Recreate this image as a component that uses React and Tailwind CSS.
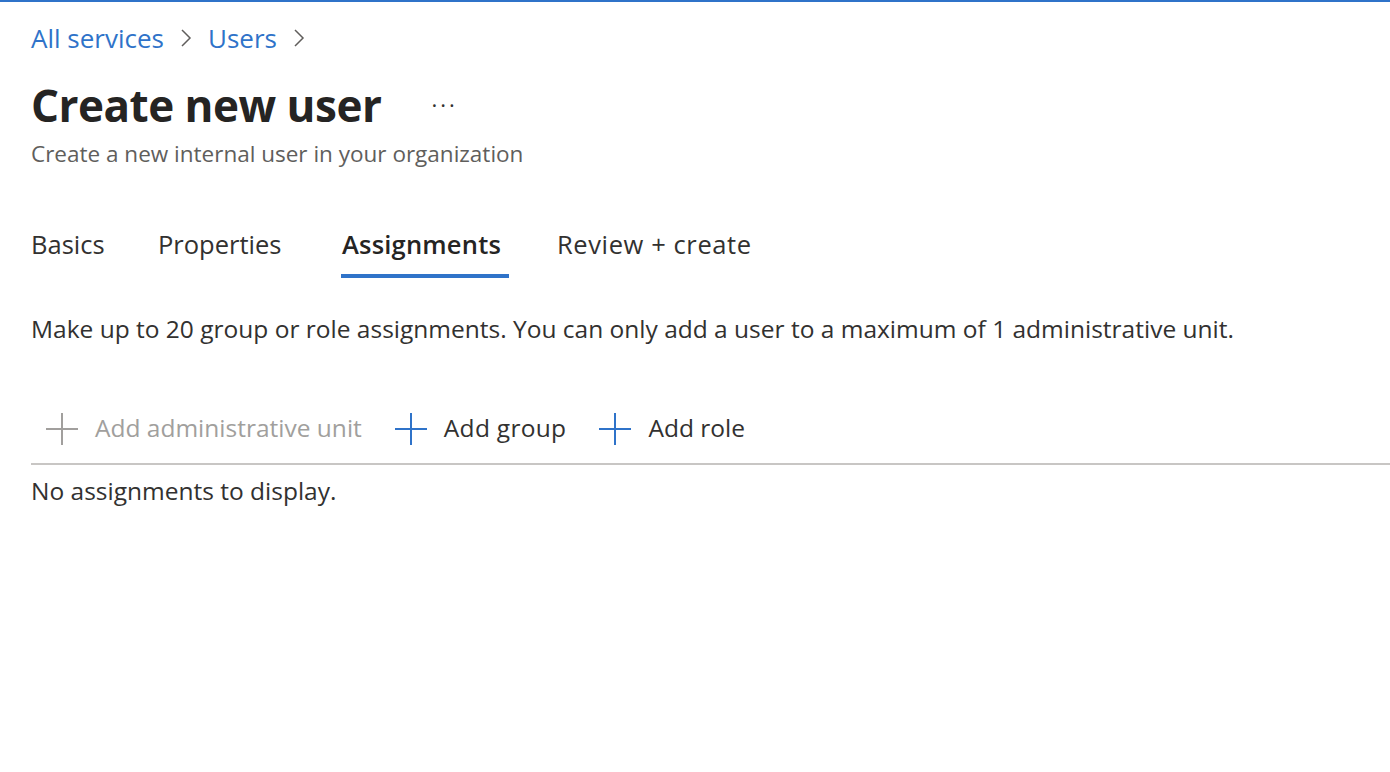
import React from "react";

function Plus({ color }) {
  return (
    <svg width="34" height="34" viewBox="0 0 34 34" className="shrink-0">
      <path d="M17 1V33M1 17H33" stroke={color} strokeWidth="2" fill="none" />
    </svg>
  );
}

function Chevron() {
  return (
    <svg width="14" height="22" viewBox="0 0 14 22" className="shrink-0">
      <path d="M3 3L11 11L3 19" stroke="#605e5c" strokeWidth="1.5" fill="none" />
    </svg>
  );
}

export default function App() {
  return (
    <div
      className="w-[1390px] h-[772px] bg-white border-t-2 border-[#2f73c9] text-[#323130] overflow-hidden"
      style={{ fontFamily: '"Open Sans", "Noto Sans", sans-serif' }}
    >
      <div className="pl-[31px]">
        <div className="flex items-center gap-[15px] mt-[18px] h-[36px] text-[26px] text-[#2f73c9]">
          <span>All services</span>
          <Chevron />
          <span>Users</span>
          <Chevron />
        </div>
        <div className="flex items-center mt-[21px] h-[56px]">
          <h1 className="text-[44px] font-bold text-[#252423] tracking-[-0.5px]">Create new user</h1>
          <span className="ml-[50px] text-[22px] text-[#323130] tracking-[3px] -mt-[2px]">···</span>
        </div>
        <div className="text-[22.5px] text-[#605e5c] mt-[6px] leading-[30px]">
          Create a new internal user in your organization
        </div>

        <div className="flex mt-[43px] h-[66px] text-[25.5px]">
          <div className="w-[127px] h-full flex items-center pb-[2px]">Basics</div>
          <div className="w-[183px] h-full flex items-center pb-[2px]">Properties</div>
          <div className="w-[168px] h-full relative flex items-center pb-[2px] font-semibold text-[#252423]">
            <span className="ml-[1px] tracking-[0.2px]">Assignments</span>
            <div className="absolute left-0 right-0 bottom-0 h-[4px] bg-[#2f73c9]" />
          </div>
          <div className="ml-[48px] h-full flex items-center pb-[2px] tracking-[0.6px]">Review + create</div>
        </div>

        <div className="mt-[35px] text-[24.5px] leading-[32px]">
          Make up to 20 group or role assignments. You can only add a user to a maximum of 1 administrative unit.
        </div>

        <div className="mt-[49px] flex items-center h-[71px] border-b-2 border-[#c8c6c4] text-[24.5px]">
          <div className="flex items-center ml-[14px] gap-[16px] text-[#a19f9d]">
            <Plus color="#a19f9d" />
            <span>Add administrative unit</span>
          </div>
          <div className="flex items-center ml-[32px] gap-[16px]">
            <Plus color="#2f73c9" />
            <span className="tracking-[0.3px]">Add group</span>
          </div>
          <div className="flex items-center ml-[32px] gap-[16px]">
            <Plus color="#2f73c9" />
            <span>Add role</span>
          </div>
        </div>

        <div className="mt-[11px] text-[24.5px] leading-[30px]">No assignments to display.</div>
      </div>
    </div>
  );
}
